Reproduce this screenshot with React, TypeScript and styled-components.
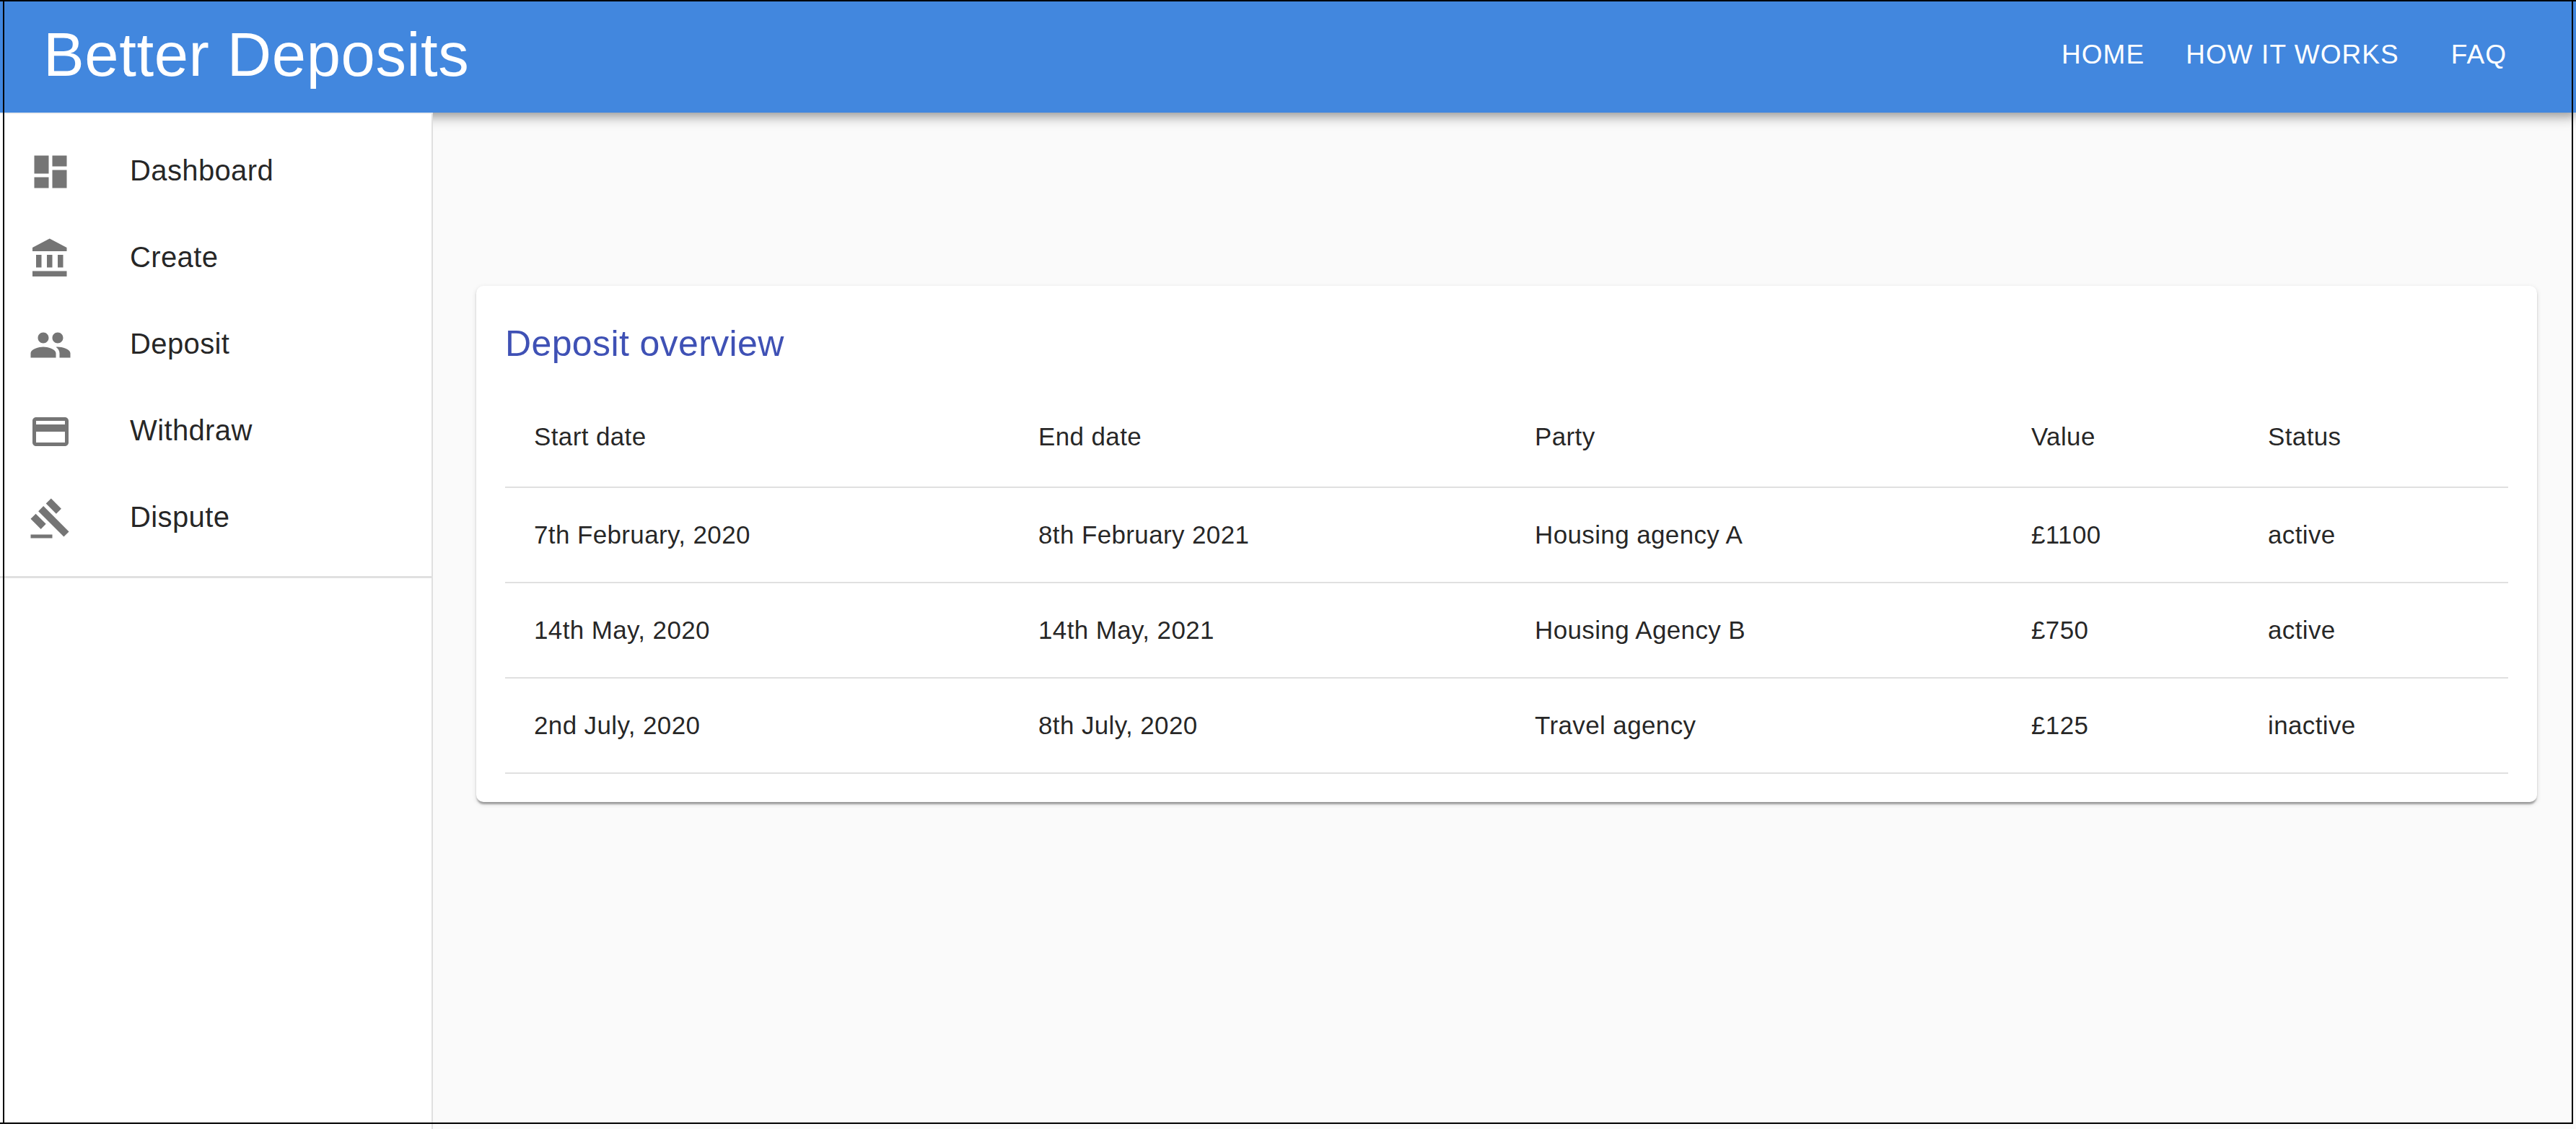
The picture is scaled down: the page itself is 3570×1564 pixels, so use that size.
import styled, { createGlobalStyle } from "styled-components"

const GlobalStyle = createGlobalStyle`
  html, body {
    margin: 0;
    padding: 0;
  }
  body {
    background: #fafafa;
    font-family: "Liberation Sans", Arial, sans-serif;
    color: rgba(0, 0, 0, 0.87);
  }
`

const navItems = [
  {
    label: "Dashboard",
    icon: "M3 13h8V3H3v10zm0 8h8v-6H3v6zm10 0h8V11h-8v10zm0-18v6h8V3h-8z",
  },
  {
    label: "Create",
    icon: "M4 10v7h3v-7H4zm6 0v7h3v-7h-3zM2 22h19v-3H2v3zm14-12v7h3v-7h-3zm-4.5-9L2 6v2h19V6l-9.5-5z",
  },
  {
    label: "Deposit",
    icon: "M16 11c1.66 0 2.99-1.34 2.99-3S17.66 5 16 5c-1.66 0-3 1.34-3 3s1.34 3 3 3zm-8 0c1.66 0 2.99-1.34 2.99-3S9.66 5 8 5C6.34 5 5 6.34 5 8s1.34 3 3 3zm0 2c-2.33 0-7 1.17-7 3.5V19h14v-2.5c0-2.33-4.67-3.5-7-3.5zm8 0c-.29 0-.62.02-.97.05 1.16.84 1.97 1.97 1.97 3.45V19h6v-2.5c0-2.33-4.67-3.5-7-3.5z",
  },
  {
    label: "Withdraw",
    icon: "M20 4H4c-1.11 0-1.99.89-1.99 2L2 18c0 1.11.89 2 2 2h16c1.11 0 2-.89 2-2V6c0-1.11-.89-2-2-2zm0 14H4v-6h16v6zm0-10H4V6h16v2z",
  },
  {
    label: "Dispute",
    icon: "M1 21h12v2H1zM5.245 8.07l2.83-2.827 14.14 14.142-2.828 2.828zM12.317 1l5.657 5.656-2.83 2.83-5.654-5.66zM3.825 9.485l5.657 5.657-2.828 2.828-5.657-5.657z",
  },
]

const columns = [
  { title: "Start date", width: 699 },
  { title: "End date", width: 688 },
  { title: "Party", width: 688 },
  { title: "Value", width: 328 },
  { title: "Status", width: 373 },
]

const deposits = [
  ["7th February, 2020", "8th February 2021", "Housing agency A", "£1100", "active"],
  ["14th May, 2020", "14th May, 2021", "Housing Agency B", "£750", "active"],
  ["2nd July, 2020", "8th July, 2020", "Travel agency", "£125", "inactive"],
]

const App = () => {
  return (
    <Page>
      <GlobalStyle />
      <Header>
        <Brand>Better Deposits</Brand>
        <Nav>
          <NavLink>Home</NavLink>
          <NavLink $gap={17}>How it works</NavLink>
          <NavLink $gap={32}>FAQ</NavLink>
        </Nav>
      </Header>

      <Body>
        <Sidebar>
          <MenuList>
            {navItems.map(item => (
              <MenuItem key={item.label}>
                <MenuIcon viewBox="0 0 24 24">
                  <path d={item.icon} />
                </MenuIcon>
                <MenuLabel>{item.label}</MenuLabel>
              </MenuItem>
            ))}
          </MenuList>
          <Divider />
        </Sidebar>

        <Main>
          <Card>
            <CardTitle>Deposit overview</CardTitle>
            <Table>
              <thead>
                <tr>
                  {columns.map(col => (
                    <HeadCell key={col.title} $width={col.width}>{col.title}</HeadCell>
                  ))}
                </tr>
              </thead>
              <tbody>
                {deposits.map(row => (
                  <tr key={row[0]}>
                    {row.map(value => (
                      <Cell key={value}>{value}</Cell>
                    ))}
                  </tr>
                ))}
              </tbody>
            </Table>
          </Card>
        </Main>
      </Body>

      <Frame />
    </Page>
  )
}

const Page = styled.div`
  position: relative;
  display: flex;
  flex-direction: column;
  height: 1564px;
  overflow: hidden;
`

const Header = styled.header`
  position: relative;
  z-index: 1;
  box-sizing: border-box;
  flex: 0 0 156px;
  display: flex;
  align-items: center;
  justify-content: space-between;
  padding: 0 76px 4px 60px;
  background: #4287de;
  color: #fff;
  box-shadow: 0 5px 10px -2.5px rgba(0, 0, 0, 0.2), 0 10px 12.5px 0 rgba(0, 0, 0, 0.14), 0 2.5px 25px 0 rgba(0, 0, 0, 0.12);
`

const Brand = styled.h1`
  margin: 0;
  font-size: 85px;
  font-weight: 400;
  line-height: 1.17;
  letter-spacing: 0.00735em;
`

const Nav = styled.nav`
  display: flex;
  align-items: center;
`

const NavLink = styled.a<{ $gap?: number }>`
  margin-left: ${props => props.$gap ?? 0}px;
  padding: 15px 20px;
  font-size: 37px;
  line-height: 1.75;
  letter-spacing: 0.02857em;
  text-transform: uppercase;
`

const Body = styled.div`
  flex: 1;
  display: flex;
  min-height: 0;
`

const Sidebar = styled.aside`
  position: relative;
  z-index: 2;
  flex: 0 0 600px;
  box-sizing: border-box;
  background: #fff;
  border-right: 2px solid #e0e0e0;
  border-top: 2px solid #eeeeee;
`

const MenuList = styled.ul`
  list-style: none;
  margin: 0;
  padding: 20px 0;
`

const MenuItem = styled.li`
  display: flex;
  align-items: center;
  height: 120px;
  padding-left: 40px;
`

const MenuIcon = styled.svg`
  flex: 0 0 60px;
  width: 60px;
  height: 60px;
  margin-right: 80px;
  fill: #757575;
`

const MenuLabel = styled.span`
  padding-bottom: 4px;
  font-size: 40px;
  line-height: 1.5;
  letter-spacing: 0.00938em;
`

const Divider = styled.hr`
  margin: 0;
  border: 0;
  height: 3px;
  background: #e0e0e0;
`

const Main = styled.main`
  flex: 1;
  min-width: 0;
  padding: 240px 54px 0 60px;
`

const Card = styled.section`
  box-sizing: border-box;
  padding: 40px 40px 39px;
  background: #fff;
  border-radius: 10px;
  box-shadow: 0 5px 2.5px -2.5px rgba(0, 0, 0, 0.2), 0 2.5px 2.5px 0 rgba(0, 0, 0, 0.14), 0 2.5px 7.5px 0 rgba(0, 0, 0, 0.12);
`

const CardTitle = styled.h2`
  margin: 0 0 16px;
  font-size: 50px;
  font-weight: 400;
  line-height: 80px;
  letter-spacing: 0.0075em;
  color: #3f51b5;
`

const Table = styled.table`
  width: 2776px;
  table-layout: fixed;
  border-collapse: separate;
  border-spacing: 0;
`

const HeadCell = styled.th<{ $width: number }>`
  box-sizing: border-box;
  width: ${props => props.$width}px;
  height: 144px;
  padding: 4px 40px 0;
  border-bottom: 2px solid #e0e0e0;
  font-size: 35px;
  font-weight: 400;
  letter-spacing: 0.01071em;
  text-align: left;
`

const Cell = styled.td`
  box-sizing: border-box;
  height: 132px;
  padding: 0 40px;
  border-bottom: 2px solid #e0e0e0;
  font-size: 35px;
  letter-spacing: 0.01071em;
`

// the black outline sits on top of the whole page
const Frame = styled.div`
  position: absolute;
  z-index: 3;
  top: 0;
  left: 4px;
  right: 4px;
  bottom: 7px;
  border-left: 2px solid #000;
  border-right: 2px solid #000;
  pointer-events: none;

  &::before {
    content: "";
    position: absolute;
    top: 0;
    left: -6px;
    right: -6px;
    height: 2px;
    background: #000;
  }

  &::after {
    content: "";
    position: absolute;
    bottom: 0;
    left: -6px;
    right: 0;
    height: 2px;
    background: #000;
  }
`

export default App
